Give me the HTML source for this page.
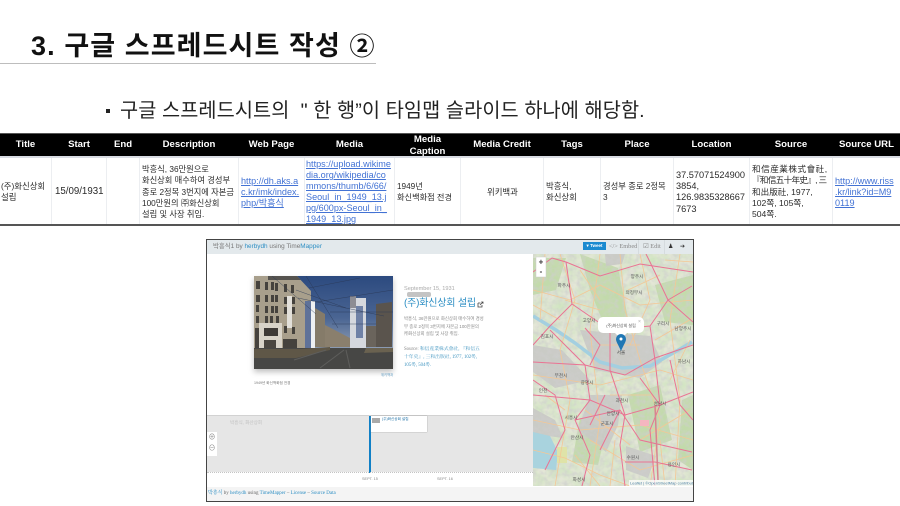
<!DOCTYPE html>
<html lang="ko"><head><meta charset="utf-8">
<style>
html,body{margin:0;padding:0;width:900px;height:506px;overflow:hidden;background:#fff}
body{position:relative;font-family:"Liberation Sans","Noto Sans CJK KR",sans-serif;color:#222}
.a{position:absolute;white-space:nowrap}
.h{top:134px;height:22px;line-height:22px;color:#fff;font-weight:bold;font-size:9.6px;text-align:center;position:absolute;white-space:nowrap}
.c{position:absolute;top:158px;height:66px;background:#fff;font-size:8.3px;line-height:11.3px;overflow:hidden;color:#2a2a2a;filter:blur(.2px)}
.c div{position:absolute;white-space:nowrap}
.l{color:#4272d4;text-decoration:underline;font-size:9.1px}
.s{color:#2e8fc4}
</style></head><body>
<div class="a" style="left:31px;top:27px;font-size:27px;line-height:38px;font-weight:bold;color:#111;letter-spacing:1.1px">3. 구글 스프레드시트 작성 <span style="font-size:25px">②</span></div>
<div class="a" style="left:0;top:63px;width:376px;height:1px;background:#bdbdbd"></div>
<div class="a" style="left:106px;top:109px;width:4px;height:4px;background:#222"></div>
<div class="a" style="left:120px;top:97px;font-size:19.7px;line-height:28px;color:#222;letter-spacing:.1px">구글 스프레드시트의 &nbsp;" 한 행”이 타임맵 슬라이드 하나에 해당함.</div>

<div class="a" style="left:0;top:133px;width:900px;height:93px;background:#eceef1"></div>
<div class="a" style="left:0;top:133px;width:900px;height:1px;background:#555"></div>
<div class="a" style="left:0;top:134px;width:900px;height:22px;background:#000"></div>
<div class="a" style="left:0;top:156px;width:900px;height:2px;background:#d9dce3"></div>
<div class="a" style="left:0;top:224px;width:900px;height:2px;background:#555"></div>

<div class="h" style="left:0;width:51px">Title</div>
<div class="h" style="left:52px;width:54px">Start</div>
<div class="h" style="left:107px;width:32px">End</div>
<div class="h" style="left:140px;width:98px">Description</div>
<div class="h" style="left:239px;width:65px">Web Page</div>
<div class="h" style="left:305px;width:89px">Media</div>
<div class="h" style="left:395px;top:134px;width:65px;line-height:11.5px;white-space:normal">Media<br>Caption</div>
<div class="h" style="left:461px;width:82px">Media Credit</div>
<div class="h" style="left:544px;width:56px">Tags</div>
<div class="h" style="left:601px;width:72px">Place</div>
<div class="h" style="left:674px;width:75px">Location</div>
<div class="h" style="left:750px;width:82px">Source</div>
<div class="h" style="left:833px;width:67px">Source URL</div>

<div class="c" style="left:0;width:51px"><div style="left:1px;top:23px;font-size:8.4px">(주)화신상회<br>설립</div></div>
<div class="c" style="left:52px;width:54px"><div style="left:3px;top:28px;font-size:9.7px">15/09/1931</div></div>
<div class="c" style="left:107px;width:32px"></div>
<div class="c" style="left:140px;width:98px"><div style="left:2px;top:6px;font-size:8.25px">박흥식, 36만원으로<br>화신상회 매수하여 경성부<br>종로 2정목 3번지에 자본금<br>100만원의 ㈜화신상회<br>설립 및 사장 취임.</div></div>
<div class="c" style="left:239px;width:65px"><div class="l" style="left:2px;top:18px;line-height:10.8px">http://dh.aks.a<br>c.kr/imk/index.<br>php/박흥식</div></div>
<div class="c" style="left:305px;width:89px"><div class="l" style="left:1px;top:1px;line-height:11px">https://upload.wikime<br>dia.org/wikipedia/co<br>mmons/thumb/6/66/<br>Seoul_in_1949_13.j<br>pg/600px-Seoul_in_<br>1949_13.jpg</div></div>
<div class="c" style="left:395px;width:65px"><div style="left:2px;top:23px;font-size:8.2px">1949년<br>화신백화점 전경</div></div>
<div class="c" style="left:461px;width:82px"><div style="left:26px;top:29px;font-size:8.4px">위키백과</div></div>
<div class="c" style="left:544px;width:56px"><div style="left:2px;top:23px;font-size:8.4px">박흥식,<br>화신상회</div></div>
<div class="c" style="left:601px;width:72px"><div style="left:2px;top:23px;font-size:8.3px">경성부 종로 2정목<br>3</div></div>
<div class="c" style="left:674px;width:75px"><div style="left:2px;top:12px;font-size:9.2px;line-height:11.2px">37.57071524900<br>3854,<br>126.9835328667<br>7673</div></div>
<div class="c" style="left:750px;width:82px"><div style="left:2px;top:6px;font-size:8.6px"><span style="letter-spacing:.5px">和信産業株式會社,</span><br><span style="letter-spacing:-.7px">『和信五十年史』, 三</span><br>和出版社, 1977,<br>102쪽, 105쪽,<br>504쪽.</div></div>
<div class="c" style="left:833px;width:67px"><div class="l" style="left:2px;top:18px;line-height:10.8px">http://www.riss<br>.kr/link?id=M9<br>0119</div></div>

<div class="a" style="left:206px;top:239px;width:486px;height:261px;border:1px solid #444;box-sizing:content-box;background:#fff;overflow:hidden;filter:blur(.25px)">
 <div class="a" style="left:0;top:0;width:487px;height:14px;background:#e3e9ec"></div>
 <div class="a" style="left:6px;top:0;font-size:6.4px;line-height:14px;color:#777">박흥식1 by <span class="s">herbydh</span> using Time<span class="s">Mapper</span></div>
 <div class="a" style="left:376px;top:2px;width:23px;height:8px;background:#1b8ad0;color:#fff;font-size:4.5px;line-height:8px;text-align:center;font-weight:bold">▾ Tweet</div>
 <div class="a" style="left:402px;top:0;font-size:6.3px;line-height:14px;color:#888;font-family:'Liberation Serif',serif">&lt;/&gt; Embed</div>
 <div class="a" style="left:431px;top:0;width:1px;height:14px;background:#d5dbde"></div>
 <div class="a" style="left:436px;top:0;font-size:6.3px;line-height:14px;color:#888;font-family:'Liberation Serif',serif">☑ Edit</div>
 <div class="a" style="left:457px;top:0;width:1px;height:14px;background:#d5dbde"></div>
 <div class="a" style="left:461px;top:0;font-size:6px;line-height:14px;color:#333">♟</div>
 <div class="a" style="left:473px;top:0;font-size:6px;line-height:14px;color:#333">➔</div>

 <!-- photo -->
 <svg class="a" style="left:47px;top:36px;filter:drop-shadow(0 3px 3px rgba(0,0,0,.25))" width="139" height="93" viewBox="0 0 139 93">
  <defs><linearGradient id="sky" x1="0" y1="0" x2="0" y2="1"><stop offset="0" stop-color="#2c4a7f"/><stop offset=".45" stop-color="#4a6593"/><stop offset=".75" stop-color="#8a9ab2"/></linearGradient></defs>
  <rect width="139" height="93" fill="url(#sky)"/>
  <path d="M0 0H43L57 15V72H0Z" fill="#a89f8c"/>
  <path d="M14 0H43L47 4H14Z" fill="#55534f"/>
  <g fill="#45423d">
   <rect x="2" y="5" width="4" height="8"/><rect x="11" y="6" width="3" height="8"/><rect x="17" y="6" width="3" height="8"/><rect x="21" y="7" width="3" height="8"/><rect x="30" y="8" width="3" height="8"/><rect x="37" y="9" width="3" height="8"/>
   <rect x="2" y="19" width="4" height="7"/><rect x="11" y="19" width="3" height="7"/><rect x="17" y="19" width="3" height="7"/><rect x="21" y="19" width="3" height="7"/><rect x="30" y="21" width="3" height="7"/><rect x="38" y="21" width="3" height="7"/>
   <rect x="2" y="29" width="3" height="7"/><rect x="11" y="30" width="3" height="7"/><rect x="17" y="30" width="3" height="7"/><rect x="21" y="30" width="3" height="7"/><rect x="30" y="31" width="3" height="7"/><rect x="38" y="31" width="3" height="7"/>
   <rect x="2" y="40" width="3" height="7"/><rect x="11" y="40" width="3" height="7"/><rect x="16" y="40" width="3" height="7"/><rect x="22" y="40" width="3" height="7"/><rect x="30" y="50" width="3" height="7"/><rect x="38" y="51" width="3" height="7"/>
   <rect x="1" y="52" width="4" height="20"/><rect x="29" y="63" width="14" height="9"/>
  </g>
  <path d="M5 47H28V72H5Z" fill="#d8d3c8"/>
  <rect x="10" y="52" width="14" height="8" fill="#3e3a36"/>
  <rect x="10" y="64" width="12" height="9" fill="#4a4640"/>
  <rect x="33" y="20" width="5" height="32" fill="#e2e0da"/>
  <path d="M61 32L71 38V71H61Z" fill="#857b69"/>
  <path d="M71 49L96 62V71H71Z" fill="#8a7f6d"/>
  <path d="M122 28L138 26V71H122Z" fill="#5a544d"/>
  <path d="M112 50H122V71H112Z" fill="#6a645c"/>
  <rect x="51" y="25" width="7" height="51" fill="#5f7299"/>
  <rect x="57" y="25" width="4" height="51" fill="#eef0f2"/>
  <rect x="96" y="22" width="16" height="54" fill="#d5d8de"/>
  <rect x="102" y="30" width="7" height="32" fill="#6f81a6"/>
  <rect x="96" y="20" width="6" height="12" fill="#8d8d94"/>
  <rect x="0" y="72" width="139" height="21" fill="#474745"/>
  <path d="M0 73H48L76 71V74L42 82H0Z" fill="#5f5747"/>
  <path d="M110 77L139 76V72H112Z" fill="#6a6250"/>
  <path d="M40 84L72 74M66 92L90 74M96 92L92 74" stroke="#5e5e5c" stroke-width="1" fill="none"/>
  <path d="M18 0L62 38M42 14L92 32M55 12L106 2M62 26L139 14M44 22L130 40M52 0L84 52M76 36H139M78 48H122" stroke="#2a3754" stroke-width=".4" fill="none"/>
 </svg>
 <div class="a" style="left:174px;top:132px;font-size:3.3px;color:#5f9ac0">위키백과</div>
 <div class="a" style="left:47px;top:141px;font-size:3.6px;color:#777">1949년 화신백화점 전경</div>

 <div class="a" style="left:197px;top:45px;font-size:5.6px;line-height:8px;color:#aaa">September 15, 1931</div>
 <div class="a" style="left:200px;top:52px;width:24px;height:5px;background:#c4c4c4;border-radius:2px"></div>
 <div class="a" style="left:197px;top:56px;font-size:10px;line-height:16px;color:#2e8fc4;letter-spacing:-.2px">(주)화신상회 설립</div>
 <svg class="a" style="left:270px;top:61px" width="7" height="7" viewBox="0 0 7 7"><path d="M1 2h2.500M1 2v4h4V4M3 4L6 1M4.200 1H6V2.800" fill="none" stroke="#444" stroke-width=".8"/></svg>
 <div class="a" style="left:197px;top:75px;font-size:4.4px;line-height:7.6px;color:#888">박흥식, 36만원으로 화신상회 매수하여 경성<br>부 종로 2정목 3번지에 자본금 100만원의<br>㈜화신상회 설립 및 사장 취임.</div>
 <div class="a" style="left:197px;top:106px;font-size:4.8px;line-height:7.8px;color:#3d93bf;font-family:'Liberation Serif','Noto Serif CJK SC',serif"><span style="color:#888">Source:</span> 和信産業株式會社, 『和信五<br>十年史』, 三和出版社, 1977, 102쪽,<br>105쪽, 504쪽.</div>

 <!-- timeline -->
 <div class="a" style="left:0;top:175px;width:326px;height:56px;background:#e6e6e6;border-top:1px solid #d2d2d2"></div>
 <div class="a" style="left:23px;top:180px;font-size:4.6px;color:#c0c0c0">박흥식, 화산상회</div>
 <div class="a" style="left:0;top:192px;width:10px;height:24px;background:#fff;color:#888;font-size:7px;line-height:11px;text-align:center">⊕<br>⊖</div>
 <div class="a" style="left:162px;top:176px;width:2px;height:57px;background:#1180c6"></div>
 <div class="a" style="left:164px;top:176px;width:56px;height:16px;background:#fff;box-shadow:0 0 1px #888"></div>
 <div class="a" style="left:165px;top:178px;width:8px;height:5px;background:#aaa"></div>
 <div class="a" style="left:175px;top:176px;font-size:3.6px;line-height:7px;color:#2474a8">(주)화신상회 설립</div>
 <div class="a" style="left:0;top:232px;width:326px;height:1px;border-top:1px dotted #c4c4c4"></div>
 <div class="a" style="left:155px;top:237px;font-size:3.8px;color:#888">SEPT. 15</div>
 <div class="a" style="left:230px;top:237px;font-size:3.8px;color:#888">SEPT. 16</div>
 <div class="a" style="left:0;top:247px;width:487px;height:14px;background:#f4f4f4"></div>
 <div class="a" style="left:1px;top:247px;font-size:5px;line-height:13px;color:#666;font-family:'Liberation Serif','Noto Serif CJK SC',serif"><span class="s">박흥식</span> by <span class="s">herbydh</span> using <span class="s">TimeMapper</span> – <span class="s">License</span> – <span class="s">Source Data</span></div>

 <!-- map -->
 <svg class="a" style="left:326px;top:14px;filter:blur(.3px)" width="160" height="232" viewBox="533 254 160 232">
  <defs>
   <filter id="nz" x="0" y="0" width="100%" height="100%"><feTurbulence type="fractalNoise" baseFrequency=".09" numOctaves="3" seed="7"/><feColorMatrix values="0 0 0 0 .62  0 0 0 0 .78  0 0 0 0 .52  1.800 0 0 0 -.55"/></filter>
   <filter id="nz2" x="0" y="0" width="100%" height="100%"><feTurbulence type="fractalNoise" baseFrequency=".22" numOctaves="2" seed="3"/><feColorMatrix values="0 0 0 0 .62  0 0 0 0 .62  0 0 0 0 .62  0 2.200 0 0 -.85"/></filter>
  </defs>
  <rect x="533" y="254" width="160" height="232" fill="#e3e6d6"/>
  <rect x="533" y="254" width="160" height="232" filter="url(#nz)"/>
  <g fill="#bcd7a2" opacity=".75">
   <path d="M580 254L618 268L628 318L606 330L590 290Z"/>
   <path d="M655 285L693 275V325L665 322Z"/>
   <path d="M533 258H566L556 290L533 295Z"/>
   <path d="M628 395L660 385L672 440L640 452Z"/>
   <path d="M580 418L606 430L598 465L572 462Z"/>
   <path d="M682 400L693 395V470L678 460Z"/>
   <path d="M606 310L628 322V338L612 334Z"/>
  </g>
  <g fill="#c9c9c6" opacity=".9">
   <path d="M580 330L650 336L662 362L640 378L595 370Z"/>
   <path d="M533 345L562 350L590 380L555 388L533 372Z"/>
   <path d="M590 395L622 395L618 425L606 452L578 430Z"/>
   <path d="M626 446L656 456L648 478L626 470Z"/>
   <path d="M533 408L555 420L563 438L533 434Z"/>
   <path d="M605 254L625 254L622 264L606 266Z"/>
  </g>
  <rect x="533" y="254" width="160" height="232" filter="url(#nz2)" opacity=".7"/>
  <path d="M533 432L550 436L558 452L556 470L533 468Z" fill="#a9d3de"/>
  <rect x="557" y="447" width="10" height="16" fill="#dfe3a8"/>
  <path d="M533 316L556 330L575 343L600 362L622 368L650 366L675 352L692 342" fill="none" stroke="#a3cfe0" stroke-width="3.500"/>
  <g fill="none" stroke="#f4c795" stroke-width=".8">
   <path d="M533 290L570 300L600 285L640 305L693 300M560 254L575 300L560 350L570 400L555 486M620 254L625 310L640 360L660 420L650 486"/>
   <path d="M533 375L600 385L660 370L693 380M533 420L580 430L640 425L693 440M590 440L640 470L693 455"/>
   <path d="M680 254L670 320L680 400L675 486M600 254L590 330L600 420L590 486M545 254L540 320M640 254L650 300L630 345"/>
   <path d="M533 450L565 458L600 475L630 486M565 300L600 310M600 345L640 345M610 395L650 395M585 410L630 445M640 440L690 410M665 260L693 262M655 340L693 318M533 305L560 320M545 395L565 410"/>
   <path d="M660 440L665 486M690 340L670 380M615 440L610 486M575 455L600 486M628 290L660 275M600 300L580 270"/>
  </g>
  <g fill="none" stroke="#ea7393" stroke-width="1">
   <path d="M533 272L552 258L566 262L600 276L640 264L693 272"/>
   <path d="M566 262L572 304L550 326L533 345"/>
   <path d="M572 304L610 330L650 326L668 300L650 262L646 254"/>
   <path d="M668 300L693 322M668 300L692 286"/>
   <path d="M550 330L585 365L590 400L575 420L590 455L582 486"/>
   <path d="M533 362L585 365L625 375L655 358L693 345"/>
   <path d="M650 326L655 360L660 405L650 430L655 486"/>
   <path d="M533 395L590 400L625 415L660 405L693 392"/>
   <path d="M575 420L620 410L640 440L692 452"/>
   <path d="M610 330L610 370L625 415L620 445L625 486"/>
   <path d="M620 410L600 450M670 360L680 405L693 420M533 380L555 395L565 430L545 470"/>
   <path d="M590 365L600 345L585 328M640 378L660 405M605 395L590 425M655 462L692 470M625 462L655 462"/>
  </g>
  <path d="M655 405L658 480" stroke="#d8848f" stroke-width="1.500" fill="none"/>
  <rect x="640" y="420" width="9" height="6" fill="#f5b6c0"/>
  <g font-family="Liberation Sans,Noto Sans CJK KR,sans-serif" font-size="4.600" fill="#555" text-anchor="middle">
   <text x="637" y="278">양주시</text><text x="634" y="294">의정부시</text><text x="564" y="287">파주시</text><text x="547" y="338">김포시</text><text x="589" y="322">고양시</text><text x="663" y="325">구리시</text><text x="683" y="330">남양주시</text><text x="684" y="363">하남시</text><text x="621" y="354">서울</text>
   <text x="561" y="377">부천시</text><text x="587" y="384">광명시</text><text x="543" y="392">인천</text><text x="622" y="402">과천시</text><text x="660" y="405">성남시</text><text x="613" y="415">안양시</text><text x="571" y="419">시흥시</text><text x="607" y="425">군포시</text><text x="577" y="439">안산시</text><text x="633" y="459">수원시</text><text x="674" y="466">용인시</text><text x="579" y="481">화성시</text>
  </g>
  <rect x="536" y="257" width="10" height="20" fill="#fff" stroke="#ccc" stroke-width=".5"/>
  <text x="541" y="264.500" font-size="8" font-weight="bold" text-anchor="middle" fill="#333" font-family="Liberation Sans">+</text>
  <text x="541" y="274" font-size="8" font-weight="bold" text-anchor="middle" fill="#333" font-family="Liberation Sans">-</text>
  <rect x="598" y="317" width="46" height="16" rx="5" fill="#fff"/>
  <path d="M615 333L621 339L627 333Z" fill="#fff"/>
  <text x="621" y="327" font-size="4" text-anchor="middle" fill="#555" font-family="Liberation Sans,Noto Sans CJK KR,sans-serif">(주)화신상회 설립</text>
  <text x="638" y="323" font-size="5" fill="#aaa" font-family="Liberation Sans">×</text>
  <path d="M621 351C618 344 616 342 616 339A5 5 0 0 1 626 339C626 342 624 344 621 351Z" fill="#1f77b4"/>
  <circle cx="621" cy="339" r="1.500" fill="#fff"/>
  <rect x="629" y="480" width="65" height="6" fill="#fff" opacity=".75"/>
  <text x="630" y="484.500" font-size="4" fill="#4a7fa0" font-family="Liberation Sans">Leaflet | ©OpenStreetMap contributors</text>
 </svg>
</div>
</body></html>
